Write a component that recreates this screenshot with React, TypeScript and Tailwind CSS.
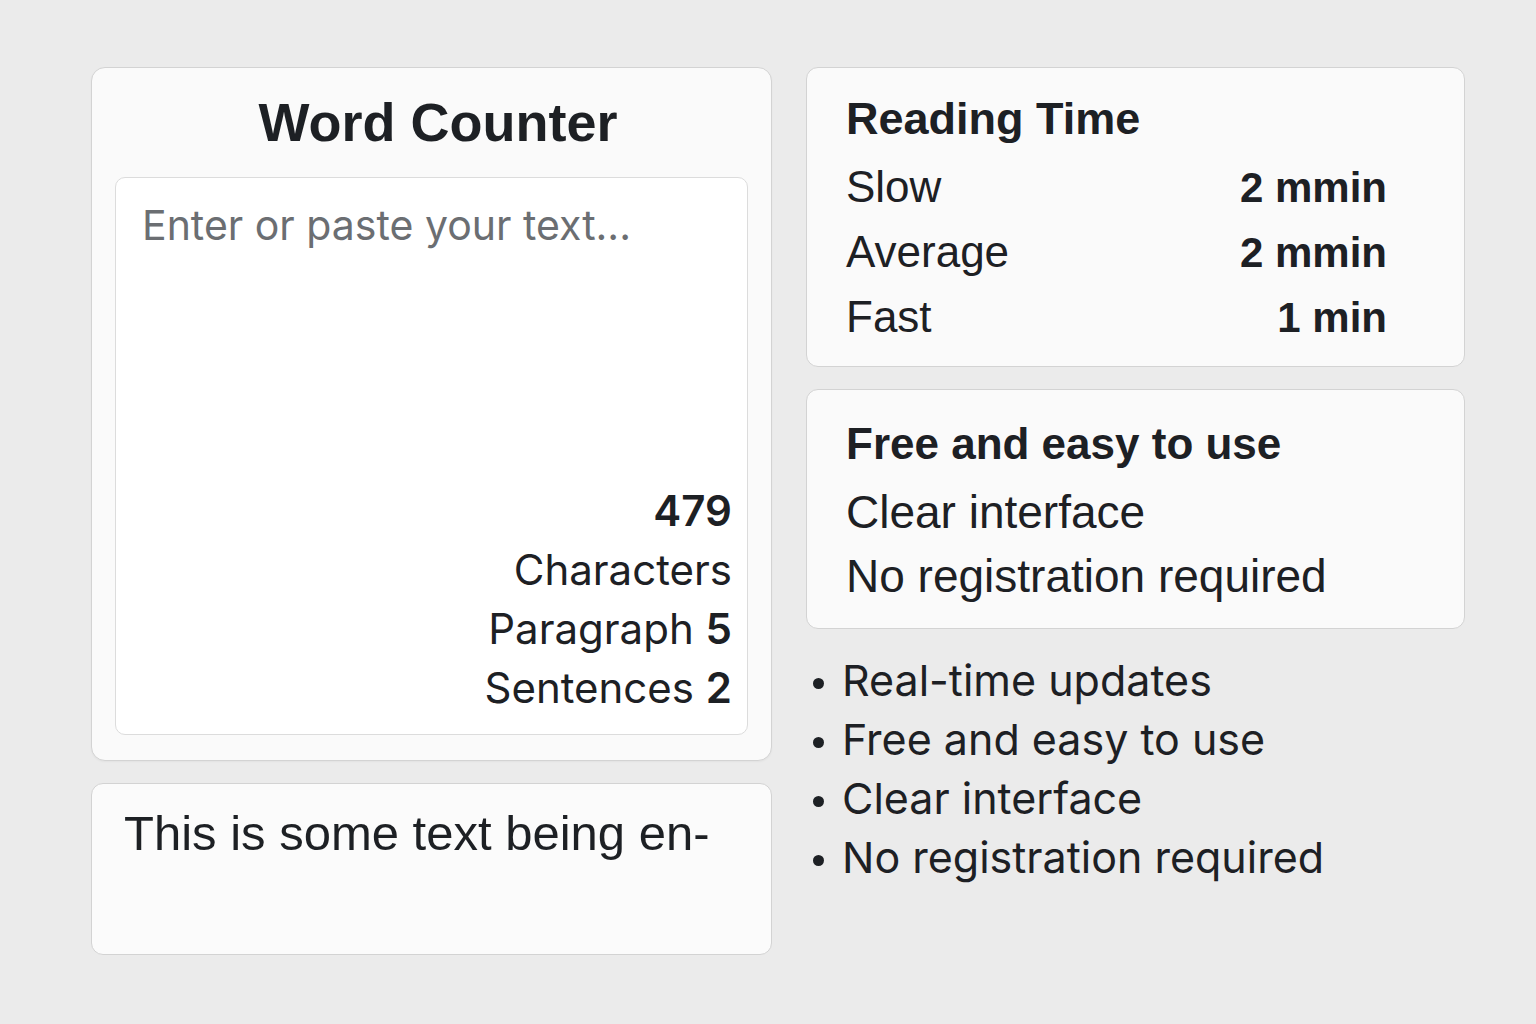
import { useMemo, useState } from 'react';

const sans = "font-['Liberation_Sans',Arial,sans-serif]";
const inter = "font-['Inter','Noto_Sans',sans-serif]";

const readingRows = [
  { label: 'Slow', value: '2 mmin' },
  { label: 'Average', value: '2 mmin' },
  { label: 'Fast', value: '1 min' },
];

const features = ['Real-time updates', 'Free and easy to use', 'Clear interface', 'No registration required'];

export default function App() {
  const [text, setText] = useState('');

  // placeholder numbers are shown until the user types something
  const stats = useMemo(() => {
    if (!text) return { chars: 479, paragraphs: 5, sentences: 2 };
    return {
      chars: text.length,
      paragraphs: text.split(/\n\s*\n/).filter(p => p.trim()).length,
      sentences: text.split(/[.!?]+/).filter(s => s.trim()).length,
    };
  }, [text]);

  return (
    <div className="min-h-screen w-full bg-[#ebebeb] text-[#1d2024]">
      <div className="grid grid-cols-[681px_659px] gap-x-[34px] pl-[91px] pt-[67px]">
        {/* Left column */}
        <div className="flex flex-col gap-[22px]">
          <div className="flex h-[694px] flex-col rounded-[14px] border border-[#d3d3d3] bg-[#fafafa] px-[23px] pb-[25px] pt-[24px] shadow-[0_1px_2px_rgba(0,0,0,0.04)]">
            <h1 className={`${sans} pl-[13px] text-center text-[54px] font-bold leading-[60px]`}>Word Counter</h1>
            <div className="mt-[25px] flex flex-1 flex-col rounded-[10px] border border-[#dcdcdc] bg-white">
              <textarea
                value={text}
                onChange={e => setText(e.target.value)}
                placeholder="Enter or paste your text..."
                className={`${inter} flex-1 resize-none bg-transparent pl-[26px] pr-4 pt-[22px] text-[41px] leading-[50px] text-[#1d2024] outline-none placeholder:text-[#6b6e72]`}
              />
              <div className={`${inter} pb-[17px] pr-[15px] text-right text-[42px] leading-[59px]`}>
                <div className="font-semibold">{stats.chars}</div>
                <div>Characters</div>
                <div>
                  Paragraph <span className="font-semibold">{stats.paragraphs}</span>
                </div>
                <div>
                  Sentences <span className="font-semibold">{stats.sentences}</span>
                </div>
              </div>
            </div>
          </div>

          <div className="h-[172px] rounded-[12px] border border-[#d3d3d3] bg-[#fbfbfb] pl-[32px] pt-[21px]">
            <p className={`${sans} text-[49px] leading-[56px]`}>This is some text being en-</p>
          </div>
        </div>

        {/* Right column */}
        <div className="flex flex-col gap-[22px]">
          <div className={`${sans} h-[300px] rounded-[12px] border border-[#d3d3d3] bg-[#fafafa] pl-[39px] pr-[77px] pt-[25px]`}>
            <h2 className="text-[45px] font-bold leading-[52px]">Reading Time</h2>
            <div className="mt-[10px]">
              {readingRows.map(r => (
                <div key={r.label} className="flex items-baseline justify-between leading-[64px]">
                  <span className="text-[44px]">{r.label}</span>
                  <span className="text-[42px] font-bold">{r.value}</span>
                </div>
              ))}
            </div>
          </div>

          <div className={`${sans} h-[240px] rounded-[12px] border border-[#d3d3d3] bg-[#fafafa] pl-[39px] pt-[28px]`}>
            <h2 className="text-[44px] font-bold leading-[52px]">Free and easy to use</h2>
            <div className="mt-[10px] text-[46px] leading-[64px]">
              <div>Clear interface</div>
              <div>No registration required</div>
            </div>
          </div>

          <ul className={`${inter} text-[43px] leading-[59px]`}>
            {features.map(f => (
              <li key={f} className="flex items-center">
                <span className="ml-[7px] mr-[18px] mt-[6px] h-[11px] w-[11px] rounded-full bg-[#1d2024]" />
                {f}
              </li>
            ))}
          </ul>
        </div>
      </div>
    </div>
  );
}
